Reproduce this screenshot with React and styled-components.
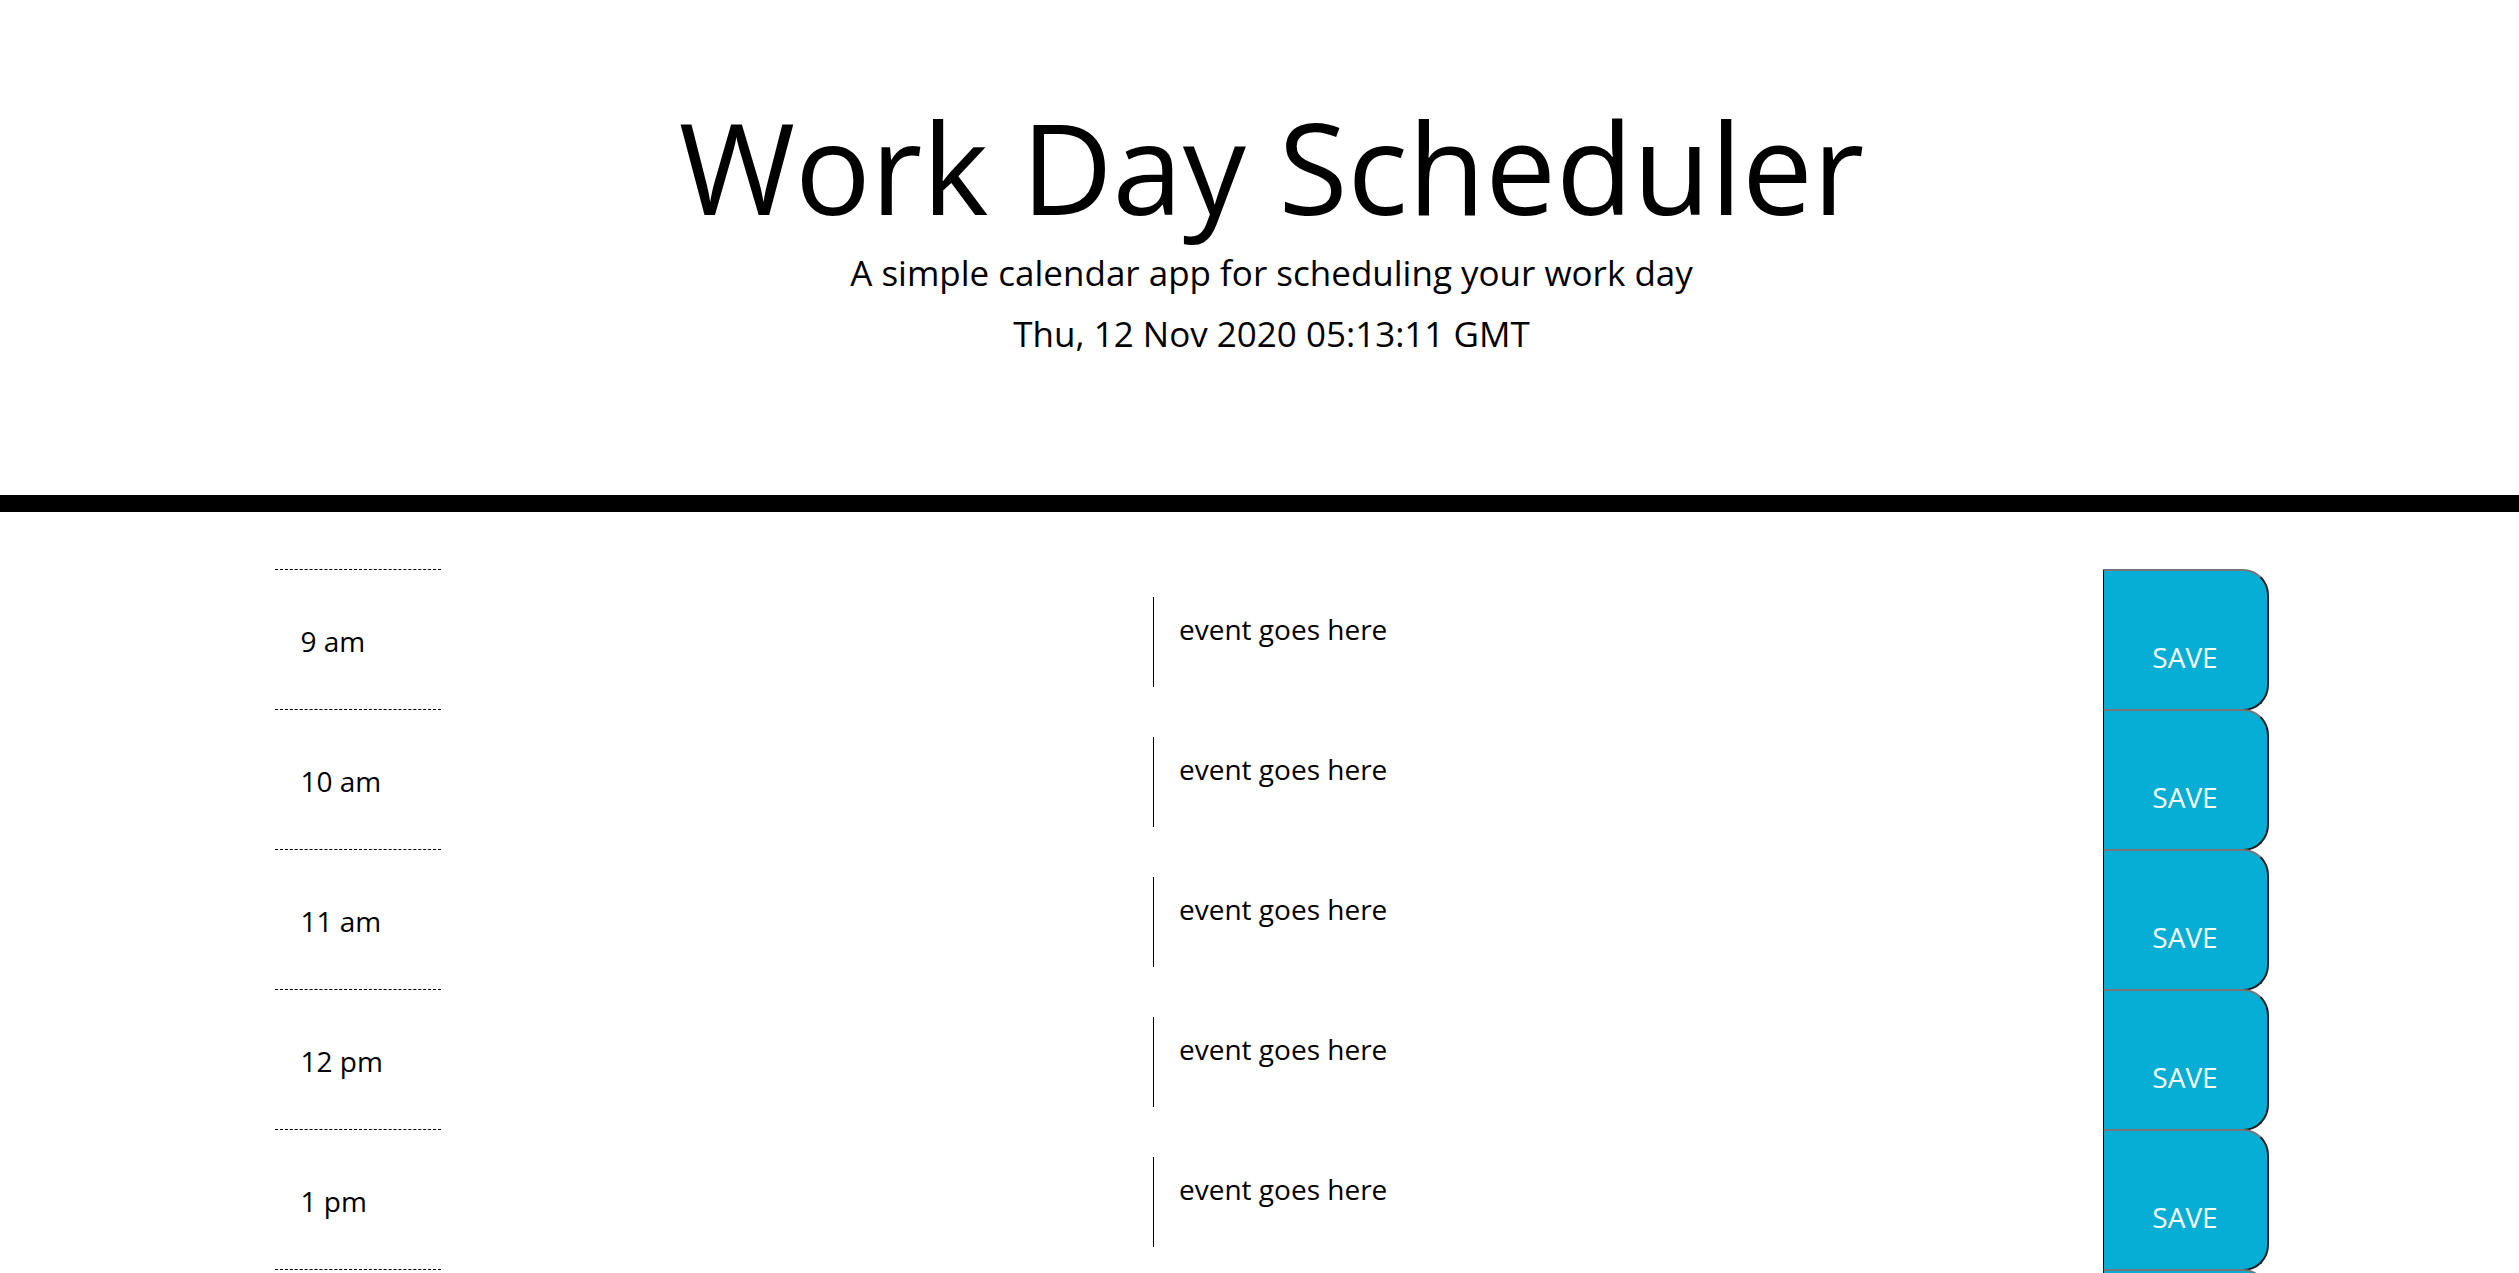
import React from "react";
import styled, { createGlobalStyle } from "styled-components";

const GlobalStyle = createGlobalStyle`
  html, body {
    margin: 0;
    padding: 0;
    background: #ffffff;
    overflow: hidden;
  }
  body {
    font-family: "Open Sans", "Noto Sans", "Liberation Sans", sans-serif;
    color: #000000;
  }
  * { box-sizing: border-box; }
`;

const Header = styled.header`
  text-align: center;
  padding: 91px 0 135px 24px;
  border-bottom: 17px solid #000000;
`;

const Title = styled.h1`
  margin: 0;
  font-size: 126px;
  font-weight: 400;
  line-height: 151px;
  color: #000000;
`;

const Lead = styled.p`
  margin: ${(p) => p.$gap}px 0 0;
  font-size: 35px;
  font-weight: 400;
  line-height: 52px;
  color: #000000;
`;

const Main = styled.main`
  padding-left: 24px;
`;

const Container = styled.div`
  width: 1994px;
  margin: 57px auto 0;
`;

const Row = styled.div`
  display: grid;
  grid-template-columns: 166px 1fr 166px;
  height: 140px;
`;

const Hour = styled.div`
  border-top: 1px dashed #000000;
  padding: 50px 0 0 26px;
  font-size: 28px;
  line-height: 42px;
  color: #000000;
`;

const EventCell = styled.div`
  display: flex;
  justify-content: center;
  align-items: flex-start;
  padding-top: 28px;
`;

const EventInput = styled.textarea`
  width: 237px;
  height: 90px;
  border: none;
  border-left: 1px solid #000000;
  padding: 13px 0 0 25px;
  font-family: "Open Sans", "Noto Sans", "Liberation Sans", sans-serif;
  font-size: 28px;
  line-height: normal;
  color: #000000;
  background: transparent;
  resize: none;
  outline: none;
  overflow: hidden;
  white-space: pre;

  &::placeholder {
    color: #000000;
    opacity: 1;
  }
`;

const SaveBtn = styled.button`
  align-self: start;
  height: 142px;
  display: flex;
  justify-content: center;
  align-items: flex-start;
  padding: 65px 0 0;
  background: #06aed5;
  color: #ffffff;
  font-family: "Open Sans", "Noto Sans", "Liberation Sans", sans-serif;
  font-size: 28px;
  line-height: 42px;
  border-top: 2px solid #767676;
  border-right: 2px solid #1d1d1d;
  border-bottom: 2px solid #1d1d1d;
  border-left: 1px solid #000000;
  border-radius: 0 26px 26px 0;
  cursor: pointer;
`;

const hours = ["9 am", "10 am", "11 am", "12 pm", "1 pm", "2 pm", "3 pm", "4 pm", "5 pm"];

export default function App() {
  return (
    <>
      <GlobalStyle />
      <Header>
        <Title>Work Day Scheduler</Title>
        <Lead $gap={5}>A simple calendar app for scheduling your work day</Lead>
        <Lead $gap={9}>Thu, 12 Nov 2020 05:13:11 GMT</Lead>
      </Header>
      <Main>
        <Container>
          {hours.map((h) => (
            <Row key={h}>
              <Hour>{h}</Hour>
              <EventCell>
                <EventInput placeholder="event goes here" wrap="off" />
              </EventCell>
              <SaveBtn>SAVE</SaveBtn>
            </Row>
          ))}
        </Container>
      </Main>
    </>
  );
}
